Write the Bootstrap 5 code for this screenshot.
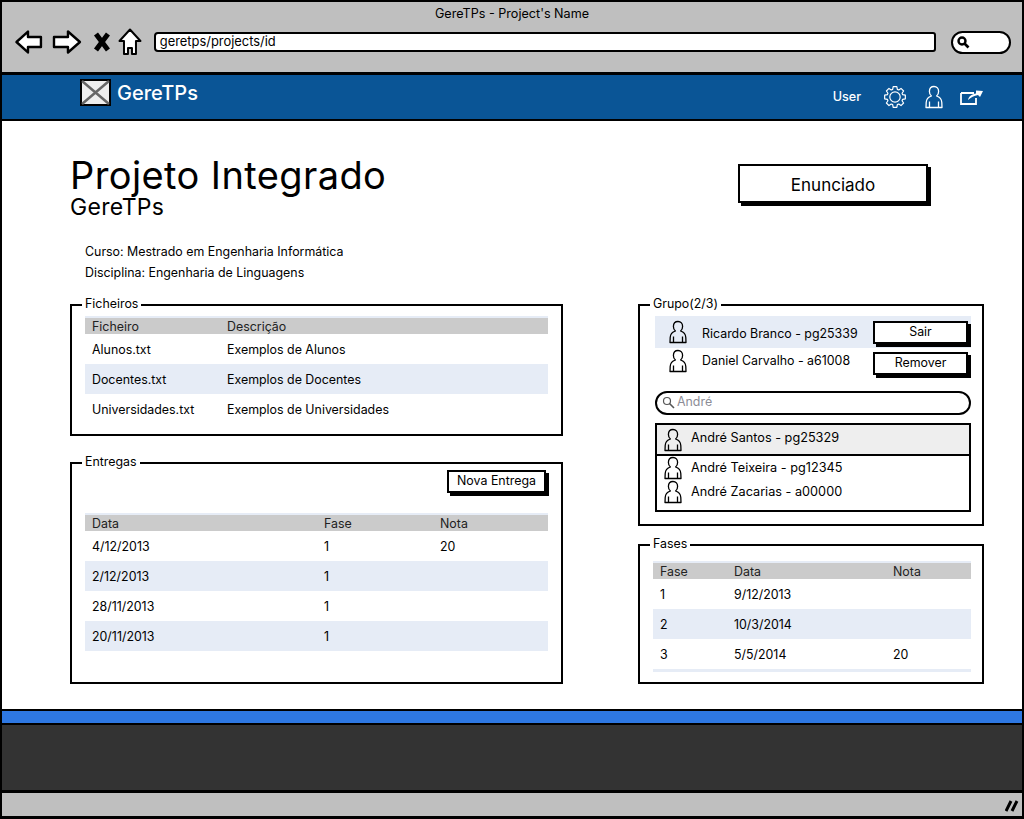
<!DOCTYPE html>
<html lang="pt">
<head>
  <meta charset="UTF-8" />
  <meta name="viewport" content="width=device-width, initial-scale=1.0" />
  <title>GereTPs - Project's Name</title>
  <link href="https://cdn.jsdelivr.net/npm/bootstrap@5.3.0/dist/css/bootstrap.min.css" rel="stylesheet" />
  <style>
    html, body { background: #fff; }
    body { font-family: "Inter", "Noto Sans", sans-serif; font-size: 12.4px; color: #000; overflow: hidden; }
    .janela { height: 819px; width: 1024px; border: 2px solid #000; border-bottom-width: 3px; }
    .cromo { height: 73px; background: #bfbfbf; border-bottom: 3px solid #000; flex: none; }
    .cromo-titulo { height: 22px; line-height: 24px; text-align: center; font-size: 12.6px; }
    .cromo-barra { padding: 0 11px 0 13px; height: 36px; }
    .seta-dir { margin-left: 9px; }
    .icone-x { margin-left: 10px; }
    .icone-casa { margin-left: 6px; }
    .endereco { width: 784px; height: 20px; margin-left: 12px; background: #fff; border: 2px solid #000; border-radius: 4px 3px 3px 4px; font-size: 12.9px; line-height: 16px; padding-left: 4px; }
    .pesquisa-mini { width: 60px; height: 23px; margin-left: 15px; background: #fff; border: 2px solid #000; border-radius: 12px; padding-left: 3px; }
    .topo { height: 46px; background: #0a5596; border-bottom: 2px solid #000; flex: none; color: #fff; padding: 0 37px 0 78px; }
    .logo-topo { margin-bottom: 9px; }
    .marca { font-size: 20px; font-weight: 500; margin: -3px 0 6px 6px; }
    .utilizador { font-size: 12.6px; font-weight: 500; margin-right: 22px; }
    .conteudo { height: 588px; padding: 34px 38px 0 68px; flex: none; }
    .titulo-grande { font-size: 38px; line-height: 40px; margin: 0; font-weight: 400; letter-spacing: .4px; }
    .subtitulo { font-size: 23px; line-height: 24px; margin: 0; font-weight: 400; letter-spacing: .3px; }
    .btn-esboco { background: #fff; color: #000; border: 2px solid #000; border-radius: 0; box-shadow: 3px 3px 0 #000; padding: 0; font-size: 12.4px; }
    .btn-esboco:hover { background: #fff; color: #000; border-color: #000; }
    .btn-enunciado { width: 190px; height: 39px; font-size: 17px; margin: 9px 56px 0 0; padding-top: 5px; }
    .btn-nova { width: 99px; height: 23px; margin: -3px 2px 0 0; }
    .btn-grupo { width: 95px; height: 23px; flex: none; margin-right: 3px; }
    .dados { margin: 22px 0 0 15px; line-height: 21px; font-size: 12.4px; }
    .colunas { margin-top: 12px; gap: 75px; }
    .col-esq { width: 493px; }
    .col-dir { width: 346px; }
    .caixa { border: 2px solid #000; margin: 0; padding: 0 13px; }
    .caixa legend { float: none; width: auto; font-size: 12.4px; line-height: 16px; margin: 0 0 0 -3px; padding: 1px 3px 3px; }
    .caixa-ficheiros { height: 141px; }
    .caixa-entregas { height: 231px; margin-top: 17px; }
    .caixa-grupo { height: 231px; padding: 0 11px 0 15px; }
    .caixa-grupo legend { margin-left: -5px; }
    .caixa-fases { height: 149px; margin-top: 9px; padding: 0 11px 0 13px; }
    .table.tabela-esboco { margin: 1px 0 0; border-top: 2px solid #e6ecf6; font-size: 12.4px; }
    .table.tabela-esboco > * > * > * { background: transparent; box-shadow: none; border: 0; color: #000; padding: 3px 7px 0; height: 30px; vertical-align: middle; }
    .table.tabela-esboco > thead > tr > th { font-weight: 400; height: 16px; line-height: 15px; padding-top: 1px; background: #cbcbcb; color: #222; }
    .table.tabela-esboco > tbody > tr:nth-child(even) > td { background: #e6ecf6; }
    .table.tabela-entregas { margin-top: 20px; }
    .table.tabela-fases { margin-top: 6px; }
    .fases-fim { height: 3px; background: #e6ecf6; }
    .membro { height: 30px; padding: 0; font-size: 12.4px; }
    .membro-sel { height: 32px; background: #e6ecf6; margin-top: 1px; }
    .membro-sel .membro-nome { padding-top: 4px; }
    .membro-seguinte .membro-nome { padding-bottom: 4px; }
    .membro-seguinte .pessoa { margin-bottom: 4px; }
    .membro-nome { margin-left: 15px; }
    .pessoa { width: 18px; height: 24px; flex: none; margin-left: 14px; }
    .pessoa-topo { margin-left: 18px; }
    .campo { height: 24px; margin-top: 13px; border: 2px solid #000; border-radius: 12px; padding: 0 0 1px 5px; color: #8c8c96; font-size: 12.4px; }
    .campo-icone { margin-right: -2px; }
    .resultados { margin-top: 8px; border: 2px solid #000; height: 89px; border-radius: 0; }
    .resultados .list-group-item { border: 0; border-radius: 0; background: transparent; color: #000; padding: 0 0 2px 7px; height: 24px; font-size: 12.7px; }
    .resultados .list-group-item.resultado-sel { height: 31px; padding-bottom: 4px; background: #eee; border-bottom: 2px solid #000; margin-bottom: 1px; }
    .resultados .resultado-sel .pessoa { margin-bottom: -4px; }
    .resultados .pessoa { margin-left: 0; margin-right: 9px; }
    .faixa-azul { height: 14px; border-top: 2px solid #000; background: #2e78e3; flex: none; }
    .faixa-escura { height: 70px; border-top: 2px solid #000; border-bottom: 3px solid #000; background: #333; flex: none; }
    .rodape { background: #bfbfbf; flex: 1; padding-right: 3px; }
  </style>
</head>
<body>
  <svg width="0" height="0" class="d-block">
    <symbol id="pessoa" viewBox="0 0 18 24">
      <path d="M9 1.500c-3 0-4.600 2.200-4.600 5 0 2 .8 3.600 2 4.500-3.300 1-5 3-5.200 6.500L1 22.500h16l-.2-5c-.2-3.500-1.900-5.500-5.200-6.500 1.200-.9 2-2.500 2-4.500 0-2.800-1.600-5-4.600-5zM4.500 22.500v-6M13.500 22.500v-6" fill="none" stroke="currentColor" stroke-width="1.300" stroke-linejoin="round" />
    </symbol>
  </svg>

  <div class="janela d-flex flex-column">
    <div class="cromo">
      <div class="cromo-titulo">GereTPs - Project's Name</div>
      <div class="cromo-barra d-flex align-items-center">
        <svg width="28" height="26" viewBox="0 0 28 26"><path d="M1.500 13 13 2.500v5.500h13v10H13v5.500z" fill="#fff" stroke="#000" stroke-width="2.400" stroke-linejoin="round" /></svg>
        <svg class="seta-dir" width="30" height="26" viewBox="0 0 30 26"><path d="M28 13 16 2.500v5.500H2v10h14v5.500z" fill="#fff" stroke="#000" stroke-width="2.400" stroke-linejoin="round" /></svg>
        <svg class="icone-x" width="20" height="22" viewBox="0 0 20 22"><path d="M4 3l12 16M16 3 4 19" fill="none" stroke="#000" stroke-width="5" /></svg>
        <svg class="icone-casa" width="24" height="28" viewBox="0 0 24 28"><path d="M12 1.500 1.500 13H6v13h4v-6h4v6h4V13h4.500z" fill="#fff" stroke="#000" stroke-width="2" stroke-linejoin="round" /></svg>
        <div class="endereco">geretps/projects/id</div>
        <div class="pesquisa-mini d-flex align-items-center">
          <svg width="14" height="14" viewBox="0 0 14 14"><circle cx="6" cy="6" r="3.500" fill="none" stroke="#000" stroke-width="2.400" /><path d="M8.500 8.500 12.500 12.500" stroke="#000" stroke-width="2.600" /></svg>
        </div>
      </div>
    </div>

    <nav class="topo d-flex align-items-center">
      <svg class="logo-topo" width="31" height="27" viewBox="0 0 31 27"><rect x="1" y="1" width="29" height="25" fill="#eee" stroke="#000" stroke-width="2" /><path d="M2 2 29 25M29 2 2 25" stroke="#666" stroke-width="2.500" /></svg>
      <span class="marca">GereTPs</span>
      <span class="utilizador ms-auto">User</span>
      <svg width="24" height="24" viewBox="0 0 24 24"><path d="M19.650 9.660 22.340 10.180 22.340 13.820 19.650 14.340 19.060 15.760 20.600 18.020 18.020 20.600 15.760 19.060 14.340 19.650 13.820 22.340 10.180 22.340 9.660 19.650 8.240 19.060 5.980 20.600 3.400 18.020 4.940 15.760 4.350 14.340 1.660 13.820 1.660 10.180 4.350 9.660 4.940 8.240 3.400 5.980 5.980 3.400 8.240 4.940 9.660 4.350 10.180 1.660 13.820 1.660 14.340 4.350 15.760 4.940 18.020 3.400 20.600 5.980 19.060 8.240z" fill="none" stroke="#fff" stroke-width="1.200" stroke-linejoin="round" /><circle cx="12" cy="12" r="5.200" fill="none" stroke="#fff" stroke-width="1.200" /></svg>
      <svg class="pessoa pessoa-topo text-white"><use href="#pessoa" /></svg>
      <svg class="ms-3" width="26" height="20" viewBox="0 0 26 20"><path d="M2 6h13M2 6v11h15v-6" fill="none" stroke="#fff" stroke-width="1.800" /><path d="M9 13c1-4 4-6 8-6.500V3.500L24 4l-3 6-2-2c-4 .5-7 2.500-10 5z" fill="#fff" /></svg>
    </nav>

    <main class="conteudo bg-white">
      <div class="d-flex justify-content-between align-items-start">
        <div>
          <h1 class="titulo-grande">Projeto Integrado</h1>
          <h2 class="subtitulo">GereTPs</h2>
        </div>
        <button type="button" class="btn btn-esboco btn-enunciado">Enunciado</button>
      </div>
      <div class="dados">
        <div>Curso: Mestrado em Engenharia Informática</div>
        <div>Disciplina: Engenharia de Linguagens</div>
      </div>

      <div class="colunas d-flex">
        <div class="col-esq">
          <fieldset class="caixa caixa-ficheiros">
            <legend>Ficheiros</legend>
            <table class="table tabela-esboco">
              <colgroup><col style="width:135px" /><col /></colgroup>
              <thead><tr><th>Ficheiro</th><th>Descrição</th></tr></thead>
              <tbody>
                <tr><td>Alunos.txt</td><td>Exemplos de Alunos</td></tr>
                <tr><td>Docentes.txt</td><td>Exemplos de Docentes</td></tr>
                <tr><td>Universidades.txt</td><td>Exemplos de Universidades</td></tr>
              </tbody>
            </table>
          </fieldset>

          <fieldset class="caixa caixa-entregas">
            <legend>Entregas</legend>
            <div class="d-flex justify-content-end">
              <button type="button" class="btn btn-esboco btn-nova">Nova Entrega</button>
            </div>
            <table class="table tabela-esboco tabela-entregas">
              <colgroup><col style="width:232px" /><col style="width:116px" /><col /></colgroup>
              <thead><tr><th>Data</th><th>Fase</th><th>Nota</th></tr></thead>
              <tbody>
                <tr><td>4/12/2013</td><td>1</td><td>20</td></tr>
                <tr><td>2/12/2013</td><td>1</td><td></td></tr>
                <tr><td>28/11/2013</td><td>1</td><td></td></tr>
                <tr><td>20/11/2013</td><td>1</td><td></td></tr>
              </tbody>
            </table>
          </fieldset>
        </div>

        <div class="col-dir">
          <fieldset class="caixa caixa-grupo">
            <legend>Grupo(2/3)</legend>
            <div class="membro membro-sel d-flex align-items-center">
              <svg class="pessoa"><use href="#pessoa" /></svg>
              <span class="membro-nome flex-grow-1">Ricardo Branco - pg25339</span>
              <button type="button" class="btn btn-esboco btn-grupo">Sair</button>
            </div>
            <div class="membro membro-seguinte d-flex align-items-center">
              <svg class="pessoa"><use href="#pessoa" /></svg>
              <span class="membro-nome flex-grow-1">Daniel Carvalho - a61008</span>
              <button type="button" class="btn btn-esboco btn-grupo">Remover</button>
            </div>
            <div class="campo d-flex align-items-center gap-1">
              <svg class="campo-icone" width="13" height="13" viewBox="0 0 13 13"><circle cx="5" cy="5" r="3.500" fill="none" stroke="#555" stroke-width="1.200" /><path d="M7.500 7.500 12 12" stroke="#555" stroke-width="1.600" /></svg>
              <span>André</span>
            </div>
            <div class="list-group resultados">
              <div class="list-group-item resultado-sel d-flex align-items-center"><svg class="pessoa"><use href="#pessoa" /></svg>André Santos - pg25329</div>
              <div class="list-group-item d-flex align-items-center"><svg class="pessoa"><use href="#pessoa" /></svg>André Teixeira - pg12345</div>
              <div class="list-group-item d-flex align-items-center"><svg class="pessoa"><use href="#pessoa" /></svg>André Zacarias - a00000</div>
            </div>
          </fieldset>

          <fieldset class="caixa caixa-fases">
            <legend>Fases</legend>
            <table class="table tabela-esboco tabela-fases">
              <colgroup><col style="width:74px" /><col style="width:159px" /><col /></colgroup>
              <thead><tr><th>Fase</th><th>Data</th><th>Nota</th></tr></thead>
              <tbody>
                <tr><td>1</td><td>9/12/2013</td><td></td></tr>
                <tr><td>2</td><td>10/3/2014</td><td></td></tr>
                <tr><td>3</td><td>5/5/2014</td><td>20</td></tr>
              </tbody>
            </table>
            <div class="fases-fim"></div>
          </fieldset>
        </div>
      </div>
    </main>

    <div class="faixa-azul"></div>
    <div class="faixa-escura"></div>
    <div class="rodape d-flex align-items-center justify-content-end">
      <svg width="14" height="14" viewBox="0 0 14 14"><path d="M1 13 6 3M7 13 12 3" stroke="#000" stroke-width="3" /></svg>
    </div>
  </div>
</body>
</html>
